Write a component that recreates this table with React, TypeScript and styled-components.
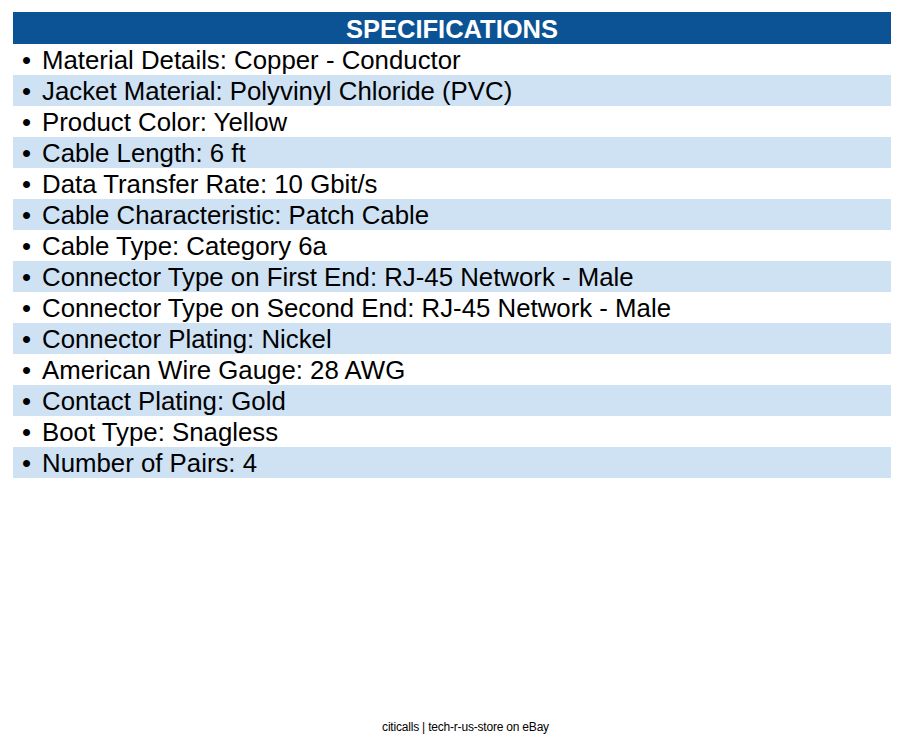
import React from "react";
import styled, { createGlobalStyle } from "styled-components";

const Global = createGlobalStyle`
  html, body { margin: 0; padding: 0; background: #ffffff; }
  body { font-family: "Liberation Sans", Arial, sans-serif; color: #000; }
`;

const Page = styled.div`
  width: 905px;
  height: 746px;
  box-sizing: border-box;
  padding: 12px 14px 0 13px;
  display: flex;
  flex-direction: column;
`;

const Header = styled.div`
  height: 32px;
  background: #0b5394;
  color: #ffffff;
  font-weight: bold;
  font-size: 25.5px;
  display: flex;
  align-items: center;
  justify-content: center;
  padding-top: 2px;
  box-sizing: border-box;
`;

const List = styled.ul`
  list-style: none;
  margin: 0;
  padding: 0;
`;

const Row = styled.li<{ $shaded: boolean }>`
  height: 31px;
  display: flex;
  align-items: center;
  padding-top: 1px;
  box-sizing: border-box;
  background: ${(p) => (p.$shaded ? "#cfe2f3" : "#ffffff")};
  font-size: 25.8px;
  line-height: 30px;
`;

const Bullet = styled.span`
  width: 29px;
  padding-left: 9px;
  box-sizing: border-box;
  flex: none;
`;

const Footer = styled.div`
  margin-top: auto;
  padding: 0 0 12px 27px;
  text-align: center;
  font-size: 12px;
  letter-spacing: -0.2px;
  color: #000;
`;

const items = [
  "Material Details: Copper - Conductor",
  "Jacket Material: Polyvinyl Chloride (PVC)",
  "Product Color: Yellow",
  "Cable Length: 6 ft",
  "Data Transfer Rate: 10 Gbit/s",
  "Cable Characteristic: Patch Cable",
  "Cable Type: Category 6a",
  "Connector Type on First End: RJ-45 Network - Male",
  "Connector Type on Second End: RJ-45 Network - Male",
  "Connector Plating: Nickel",
  "American Wire Gauge: 28 AWG",
  "Contact Plating: Gold",
  "Boot Type: Snagless",
  "Number of Pairs: 4",
];

export default function App() {
  return (
    <>
      <Global />
      <Page>
        <Header>SPECIFICATIONS</Header>
        <List>
          {items.map((t, i) => (
            <Row key={t} $shaded={i % 2 === 1}>
              <Bullet>•</Bullet>
              <span>{t}</span>
            </Row>
          ))}
        </List>
        <Footer>citicalls | tech-r-us-store on eBay</Footer>
      </Page>
    </>
  );
}
